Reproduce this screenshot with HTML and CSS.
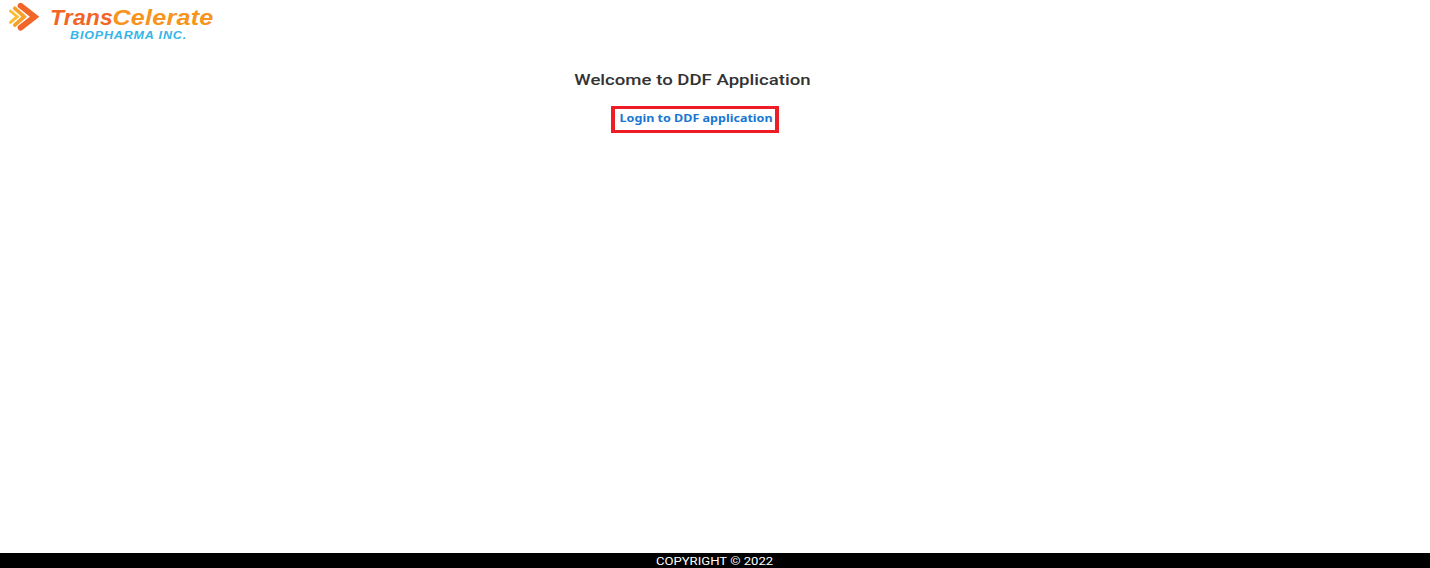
FILE: index.html
```html
<!DOCTYPE html>
<html lang="en">
<head>
<meta charset="utf-8">
<title>DDF Application</title>
<link rel="stylesheet" href="styles.css">
</head>
<body>
<div class="page">
  <header class="header">
    <svg class="logo" width="220" height="44" viewBox="0 0 220 44" role="img" aria-label="TransCelerate Biopharma Inc.">
      <g fill="none" stroke-linecap="round">
        <path d="M10.4 11 L17.3 16.7 L10.4 22.4" stroke="#fdbb30" stroke-width="2.8"/>
        <path d="M14.8 8.3 L24.2 16.7 L14.8 25.1" stroke="#f9a02b" stroke-width="3.7"/>
        <path d="M20.6 5.8 L34.6 16.7 L20.6 27.6" stroke="#f26529" stroke-width="5.8"/>
      </g>
      <text class="brand brand-first" x="50" y="24.6" textLength="63" lengthAdjust="spacingAndGlyphs">Trans</text>
      <text class="brand brand-second" x="112.5" y="24.6" textLength="101" lengthAdjust="spacingAndGlyphs">Celerate</text>
      <text class="brand-sub" x="70" y="38.6" textLength="117" lengthAdjust="spacingAndGlyphs">BIOPHARMA INC.</text>
    </svg>
  </header>
  <main class="content">
    <h1 class="title">Welcome to DDF Application</h1>
    <a class="login" href="#"><span class="login-text">Login to DDF application</span></a>
  </main>
  <footer class="footer"><span class="footer-text">COPYRIGHT © 2022</span></footer>
</div>
</body>
</html>
```
FILE: styles.css
```css
* { box-sizing: border-box; }
body { margin: 0; background: #fff; font-family: Roboto, sans-serif; }
.page { height: 568px; display: flex; flex-direction: column; overflow: hidden; }
.header { height: 44px; }
.logo { display: block; }
.brand { font: italic bold 22px "Liberation Sans", sans-serif; letter-spacing: 0.2px; }
.brand-first { fill: #f26529; }
.brand-second { fill: #f7941e; }
.brand-sub { font: italic bold 10.4px "Liberation Sans", sans-serif; letter-spacing: 0.7px; fill: #35b4e8; }
.content { flex: 1; display: flex; flex-direction: column; align-items: center; padding: 26px 45px 0 0; }
.title { margin: 0; font-size: 15.5px; line-height: 20px; font-weight: 500; color: #333; white-space: nowrap; transform: scaleX(1.2); }
.login { display: flex; align-items: center; justify-content: center; width: 168px; height: 27px; margin: 16px 0 0 5px; padding: 0 0 3px 2px; border: 3px solid #ee1c25; border-left-width: 4px; border-right-width: 4px; color: #1976d2; text-decoration: none; }
.login-text { font: bold 11px/16px "Noto Sans", sans-serif; white-space: nowrap; transform: scaleX(1.14); }
.footer { height: 15px; background: #000; color: #fff; display: flex; justify-content: center; }
.footer-text { font-size: 11.3px; line-height: 17px; white-space: nowrap; transform: scaleX(1.16); }
```
